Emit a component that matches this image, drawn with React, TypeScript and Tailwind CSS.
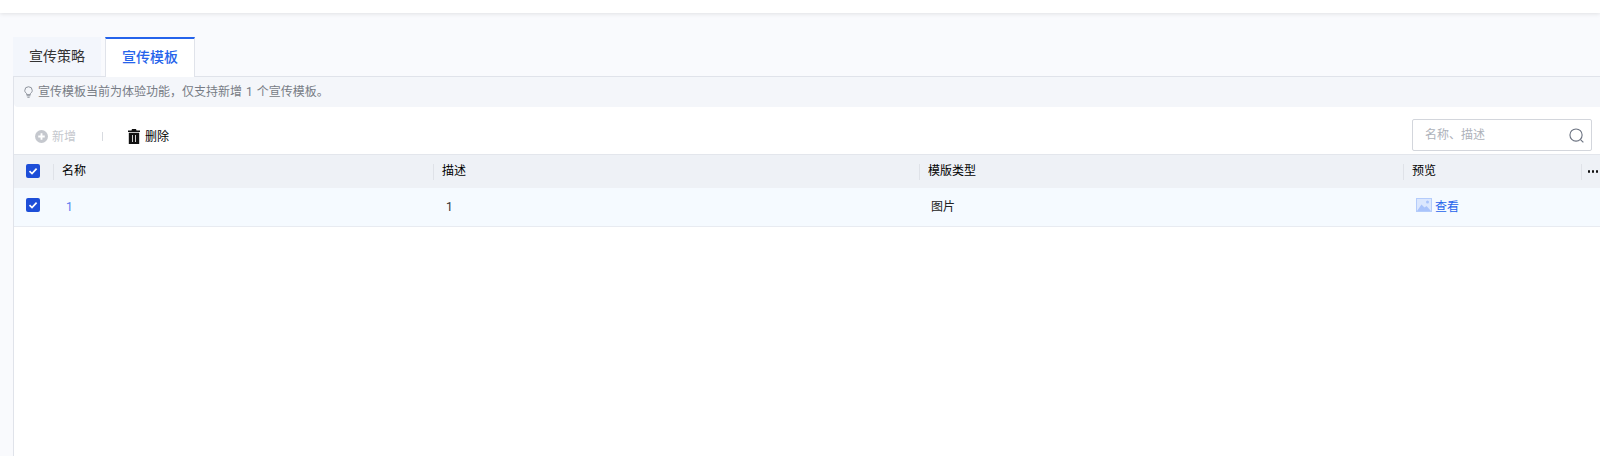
import React from "react";

const font = { fontFamily: 'Roboto, "Noto Sans CJK SC", sans-serif' };

function Check() {
  return (
    <span className="flex h-[14px] w-[14px] items-center justify-center rounded-[2px] bg-[#1d4ed8]">
      <svg width="10" height="10" viewBox="0 0 10 10" fill="none">
        <path d="M1.500 5.200 4 7.600 8.600 2.600" stroke="#fff" strokeWidth="1.700" />
      </svg>
    </span>
  );
}

function HeadCell({ className, children }: { className: string; children: React.ReactNode }) {
  return (
    <div className={`flex h-[16px] items-center border-l border-[#dfe2e8] pb-[2px] pl-[8px] text-[12px] text-black ${className}`}>
      {children}
    </div>
  );
}

export default function App() {
  return (
    <div className="flex h-[456px] w-[1600px] flex-col overflow-hidden bg-[#f9fafd]" style={font}>
      <div className="h-[13px] shrink-0 bg-white shadow-[0_1px_4px_rgba(0,0,0,0.1)]" />
      <div className="flex h-[63px] shrink-0 items-end gap-[4px] pl-[13px]">
        <div className="flex h-[39px] w-[88px] items-center justify-center bg-[#f3f6fc] pb-[1px] text-[14px] text-[#333]">
          宣传策略
        </div>
        <div className="z-10 -mb-px flex h-[40px] w-[90px] items-center justify-center border-x border-t-2 border-x-[#e0e3ea] border-t-[#2563eb] bg-white pb-[2px] text-[14px] font-medium text-[#2563eb]">
          宣传模板
        </div>
      </div>
      <div className="ml-[13px] flex flex-1 flex-col border-l border-t border-[#e0e3ea] bg-white">
        <div className="flex h-[30px] shrink-0 items-center gap-[5px] rounded-bl-[4px] bg-[#f4f6fa] pl-[10px] text-[12px] text-[#777c85]">
          <svg width="9" height="12" viewBox="0 0 12 16" fill="none" stroke="#8b9099" strokeWidth="1.300">
            <path d="M3.500 10C2 9 1 7.700 1 6a5 5 0 0 1 10 0c0 1.700-1 3-2.500 4v1.500h-5z" />
            <path d="M3.500 13h5M4.500 15h3" />
          </svg>
          <span className="[word-spacing:1px]">宣传模板当前为体验功能，仅支持新增 1 个宣传模板。</span>
        </div>
        <div className="flex h-[47px] shrink-0 items-center pl-[21px] pt-[11px] text-[12px]">
          <svg width="13" height="13" viewBox="0 0 14 14">
            <circle cx="7" cy="7" r="7" fill="#c5c8ce" />
            <path d="M7 3.500v7M3.500 7h7" stroke="#fff" strokeWidth="2" />
          </svg>
          <span className="ml-[4px] pt-[1px] text-[#c5c8ce]">新增</span>
          <span className="ml-[26px] h-[9px] w-px bg-[#d8dbe0]" />
          <svg className="ml-[25px]" width="12" height="15" viewBox="0 0 12 15">
            <path d="M4 0h4l.5 1.500H12V3H0V1.500h3.500z" fill="#111" />
            <path fillRule="evenodd" d="M.8 3.800h10.400V15H.8zM4 6v7h.8V6zM7.200 6v7H8V6z" fill="#111" />
          </svg>
          <span className="ml-[5px] pt-[1px] text-black">删除</span>
          <div className="ml-auto mr-[8px] -mt-[2px] flex h-[32px] w-[180px] items-center justify-between rounded-[2px] border border-[#d3d6dc] pl-[12px] pr-[7px] text-[12px] text-[#aeb2ba]">
            <span>名称、描述</span>
            <svg width="15" height="15" viewBox="0 0 16 16" fill="none" stroke="#6b7280" strokeWidth="1.200">
              <circle cx="7.500" cy="7.500" r="6.500" />
              <path d="M12.300 12.300l3 3" />
            </svg>
          </div>
        </div>
        <div className="flex h-[34px] shrink-0 items-center border-t border-[#e3e6ec] bg-[#eef1f6]">
          <div className="-mt-[1px] flex w-[39px] shrink-0 justify-start pl-[12px]">
            <Check />
          </div>
          <HeadCell className="w-[380px]">名称</HeadCell>
          <HeadCell className="w-[486px]">描述</HeadCell>
          <HeadCell className="w-[484px]">模版类型</HeadCell>
          <HeadCell className="w-[178px]">预览</HeadCell>
          <div className="flex h-[16px] flex-1 items-center gap-[2px] border-l border-[#dfe2e8] pl-[6px]">
            <span className="h-[3px] w-[2px] rounded-full bg-[#111]" />
            <span className="h-[3px] w-[2px] rounded-full bg-[#111]" />
            <span className="h-[3px] w-[2px] rounded-full bg-[#111]" />
          </div>
        </div>
        <div className="flex h-[39px] shrink-0 items-center border-b border-[#e8ebf1] bg-[#f5faff] text-[12px]">
          <div className="-mt-[4px] flex w-[39px] shrink-0 justify-start pl-[12px]">
            <Check />
          </div>
          <div className="w-[380px] pl-[13px] text-[#5b7cf0]">1</div>
          <div className="w-[486px] pl-[13px] text-[#333]">1</div>
          <div className="w-[484px] pl-[12px] text-[#222]">图片</div>
          <div className="flex flex-1 items-center gap-[3px] pl-[13px] text-[#2563eb]">
            <svg className="-mt-[4px]" width="16" height="14" viewBox="0 0 16 14">
              <rect width="16" height="14" fill="#b4ccfb" />
              <rect x="1" y="1" width="14" height="12" fill="#dbe7fe" />
              <circle cx="11.500" cy="4" r="1.500" fill="#a9c3fb" />
              <path d="M1 13l4.500-6.500 3 3 2-1.500 4.500 5z" fill="#a9c3fb" />
            </svg>
            <span>查看</span>
          </div>
        </div>
      </div>
    </div>
  );
}
